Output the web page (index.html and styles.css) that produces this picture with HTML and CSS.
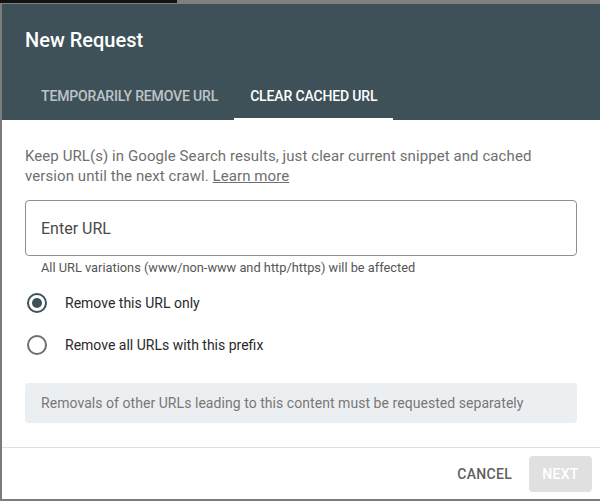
FILE: index.html
```html
<!DOCTYPE html>
<html lang="en">
<head>
<meta charset="utf-8">
<title>New Request</title>
<link rel="stylesheet" href="styles.css">
</head>
<body>
<div class="topbar"><div class="topbar-dark"></div></div>
<div class="dialog">
  <header class="header">
    <h1 class="title">New Request</h1>
    <nav class="tabs">
      <div class="tab">Temporarily remove URL</div>
      <div class="tab tab-active">Clear cached URL</div>
    </nav>
  </header>
  <main class="content">
    <p class="intro">Keep URL(s) in Google Search results, just clear current snippet and cached version until the next crawl. <a class="link" href="#">Learn more</a></p>
    <div class="field"><span class="placeholder">Enter URL</span></div>
    <div class="helper">All URL variations (www/non-www and http/https) will be affected</div>
    <div class="radios">
      <label class="radio-row"><span class="radio radio-on"><span class="dot"></span></span><span class="radio-label">Remove this URL only</span></label>
      <label class="radio-row"><span class="radio"></span><span class="radio-label">Remove all URLs with this prefix</span></label>
    </div>
    <div class="note">Removals of other URLs leading to this content must be requested separately</div>
  </main>
  <footer class="footer">
    <button class="btn btn-text">Cancel</button>
    <button class="btn btn-disabled">Next</button>
  </footer>
</div>
</body>
</html>
```
FILE: styles.css
```css
* { box-sizing: border-box; }
html, body { margin: 0; padding: 0; }
body {
  width: 600px;
  height: 501px;
  overflow: hidden;
  background: #7c7c7c;
  font-family: Roboto, "Liberation Sans", Arial, sans-serif;
}
.topbar {
  height: 4px;
  display: flex;
  background: #808080;
}
.topbar-dark {
  width: 177px;
  height: 3px;
  background: #121212;
}
.dialog {
  margin-left: 2px;
  height: 495px;
  background: #ffffff;
  display: flex;
  flex-direction: column;
}
.header {
  background: #3e5159;
  padding: 0 23px;
}
.title {
  margin: 0;
  padding: 24px 0 20px;
  font-size: 20px;
  line-height: 24px;
  font-weight: 500;
  color: #ffffff;
}
.tabs {
  display: flex;
  height: 48px;
}
.tab {
  padding: 2px 16px 0;
  height: 48px;
  display: flex;
  align-items: center;
  font-size: 14px;
  font-weight: 500;
  letter-spacing: -0.15px;
  text-transform: uppercase;
  color: rgba(255, 255, 255, 0.68);
  border-bottom: 2px solid transparent;
}
.tab-active {
  color: #ffffff;
  border-bottom-color: #ffffff;
}
.content {
  flex: 1;
  padding: 26px 23px 24px;
  border-bottom: 1px solid #e0e0e0;
}
.intro {
  margin: 0;
  font-size: 15px;
  line-height: 20px;
  letter-spacing: 0.08px;
  color: #6f6f6f;
}
.link {
  color: #6f6f6f;
  text-decoration: underline;
}
.field {
  margin-top: 14px;
  height: 56px;
  border: 1px solid #8f8f8f;
  border-radius: 4px;
  display: flex;
  align-items: center;
  padding-left: 15px;
}
.placeholder {
  font-size: 16px;
  color: #4a4a4a;
}
.helper {
  margin-top: 4px;
  padding-left: 16px;
  font-size: 12.8px;
  line-height: 16px;
  color: #555555;
}
.radios {
  margin-top: 6px;
  display: flex;
  flex-direction: column;
}
.radio-row {
  height: 42px;
  display: flex;
  align-items: center;
  padding-left: 2px;
}
.radio {
  width: 20px;
  height: 20px;
  border: 2px solid #6e6e6e;
  border-radius: 50%;
  display: flex;
  align-items: center;
  justify-content: center;
  margin-right: 18px;
}
.radio-on {
  border-color: #3e5159;
}
.dot {
  width: 10px;
  height: 10px;
  border-radius: 50%;
  background: #3e5159;
}
.radio-label {
  font-size: 14px;
  color: #2a2a2a;
}
.note {
  margin-top: 17px;
  height: 40px;
  background: #eceff1;
  border-radius: 4px;
  display: flex;
  align-items: center;
  padding-left: 16px;
  font-size: 14px;
  letter-spacing: 0.05px;
  color: #777777;
}
.footer {
  height: 51px;
  display: flex;
  justify-content: flex-end;
  align-items: flex-start;
  padding: 8px 8px 0 0;
}
.btn {
  height: 36px;
  border: none;
  border-radius: 4px;
  font-family: inherit;
  font-size: 14px;
  font-weight: 500;
  letter-spacing: 0.3px;
  text-transform: uppercase;
  background: transparent;
}
.btn-text {
  padding: 0 8px;
  color: #5f5f5f;
  margin-right: 9px;
}
.btn-disabled {
  width: 63px;
  background: #e0e0e0;
  color: #ffffff;
}
```
